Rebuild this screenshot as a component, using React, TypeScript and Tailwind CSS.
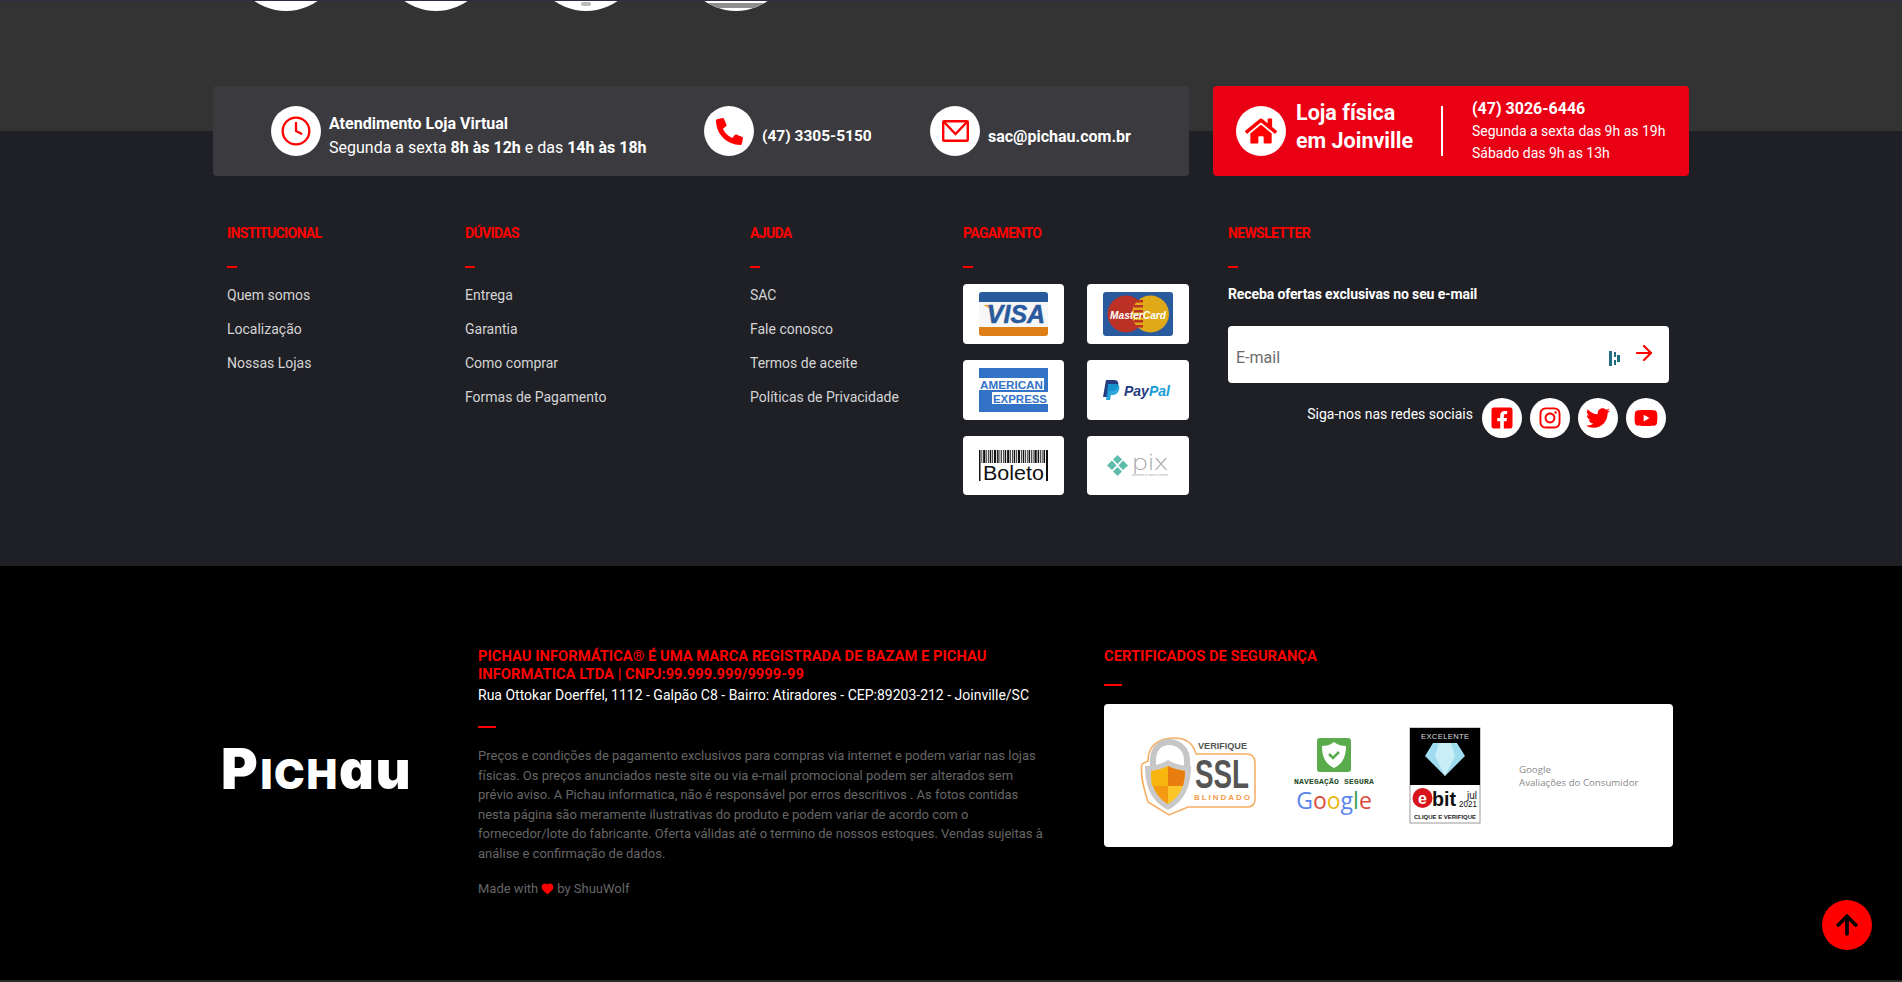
import React from 'react';
import { ArrowRight, ArrowUp, Clock, Heart } from 'lucide-react';
import { FaFacebookSquare, FaHome, FaInstagram, FaPhoneAlt, FaTwitter, FaYoutube } from 'react-icons/fa';

const columns = [
  { title: 'INSTITUCIONAL', width: 'w-[238px]', links: ['Quem somos', 'Localização', 'Nossas Lojas'] },
  { title: 'DÚVIDAS', width: 'w-[285px]', links: ['Entrega', 'Garantia', 'Como comprar', 'Formas de Pagamento'] },
  { title: 'AJUDA', width: 'w-[213px]', links: ['SAC', 'Fale conosco', 'Termos de aceite', 'Políticas de Privacidade'] },
];

const barcode = [2, 1, 3, 1, 1, 2, 1, 3, 2, 1, 1, 1, 2, 3, 1, 1, 2, 1, 3, 1, 2, 1, 1, 2, 1, 1, 3, 2, 1, 1, 2, 1];

function VisaLogo() {
  return (
    <svg className="overflow-visible" width="69" height="44" viewBox="0 0 69 44">
      <rect width="69" height="44" rx="3" fill="#f6f6f6" />
      <path d="M0 3a3 3 0 0 1 3-3h63a3 3 0 0 1 3 3v7H0z" fill="#2a5a9e" />
      <path d="M0 35h69v6a3 3 0 0 1-3 3H3a3 3 0 0 1-3-3z" fill="#dd7e17" />
      <path d="M4 13h9l3 10c-2-5-7-8-12-10z" fill="#e49a2b" />
      <text x="37" y="31" textAnchor="middle" fontFamily="Liberation Sans" fontSize="25" fontWeight="700" fontStyle="italic" fill="#2a5a9e" stroke="#2a5a9e" strokeWidth="0.5">VISA</text>
    </svg>
  );
}

function MasterLogo() {
  return (
    <svg className="overflow-visible" width="70" height="44" viewBox="0 0 70 44">
      <rect width="70" height="44" rx="3" fill="#2a5a9e" />
      <circle cx="23" cy="22" r="18.5" fill="#bb3126" />
      <circle cx="47.5" cy="22" r="18.5" fill="#e0a917" />
      {[8, 13, 18, 23, 28, 33].map((y) => (
        <rect key={y} x="31" y={y} width="9" height="2.5" fill="#bb3126" />
      ))}
      <text x="7" y="27" fontFamily="Liberation Sans" fontSize="11" fontWeight="700" fontStyle="italic" fill="#fff" textLength="56" lengthAdjust="spacingAndGlyphs">MasterCard</text>
    </svg>
  );
}

function AmexLogo() {
  return (
    <svg className="overflow-visible" width="69" height="44" viewBox="0 0 69 44">
      <rect width="69" height="44" fill="#3373c6" />
      <rect y="10" width="65" height="12" fill="#fff" />
      <rect x="13" y="24" width="56" height="12" fill="#fff" />
      <text x="1" y="20.5" fontFamily="Liberation Sans" fontSize="11" fontWeight="700" fill="#3373c6" textLength="63" lengthAdjust="spacingAndGlyphs">AMERICAN</text>
      <text x="14" y="34.5" fontFamily="Liberation Sans" fontSize="11" fontWeight="700" fill="#3373c6" textLength="54" lengthAdjust="spacingAndGlyphs">EXPRESS</text>
    </svg>
  );
}

function PaypalLogo() {
  return (
    <svg className="overflow-visible" width="70" height="20" viewBox="0 0 70 20">
      <path d="M3 0h8c4 0 5 3 4 6-1 4-4 5-7 5H6l-1 6H0z" fill="#253b80" />
      <path d="M5 4h7c4 0 5 2 4 6-1 3-3 5-7 5H8l-1 5H3z" fill="#179bd7" opacity="0.9" />
      <text x="21" y="16" fontFamily="Liberation Sans" fontSize="14" fontWeight="700" fontStyle="italic" fill="#253b80">Pay<tspan fill="#179bd7">Pal</tspan></text>
    </svg>
  );
}

function BoletoLogo() {
  let x = 0;
  return (
    <svg className="overflow-visible" width="69" height="31" viewBox="0 0 69 31">
      {barcode.map((w, i) => {
        const bar = <rect key={i} x={x} y="0" width={w * 0.75} height={i === 0 ? 31 : 13} fill="#111" />;
        x += w * 0.75 + 0.95;
        return bar;
      })}
      <rect x="67" y="0" width="2" height="31" fill="#111" />
      <text x="4" y="30" fontFamily="Liberation Sans" fontSize="20" fill="#111" textLength="61" lengthAdjust="spacingAndGlyphs">Boleto</text>
    </svg>
  );
}

function PixLogo() {
  return (
    <svg className="overflow-visible" width="62" height="23" viewBox="0 0 62 23">
      <g fill="#5dbcab">
        <path d="M10.5 1 15 5.5l-4.5 4.5L6 5.5z" />
        <path d="M10.5 13 15 17.5 10.5 22 6 17.5z" />
        <path d="M5 6.5 9.5 11.5 5 16 0 11.5z" />
        <path d="M16 6.5 21 11.5 16 16l-4.5-4.5z" />
      </g>
      <text x="25" y="16" fontFamily="Inter" fontSize="22" fontWeight="200" fill="#a9a9a9" textLength="36" lengthAdjust="spacingAndGlyphs">pix</text>
      <text x="25" y="21.5" fontFamily="Inter" fontSize="2.500" fill="#a9a9a9" textLength="36" lengthAdjust="spacingAndGlyphs">powered by Banco Central</text>
    </svg>
  );
}

function SslBadge() {
  return (
    <svg className="overflow-visible" width="116" height="80" viewBox="0 0 116 80">
      <path d="M34 2c14 0 20 8 22 16h50c6 0 9 3 9 9v36c0 5-3 8-8 8H48L29 79 8 66C3 50 0 38 2 28l6-3C8 10 18 2 34 2z" fill="#fff" stroke="#f6ad62" strokeWidth="1.5" />
      <path d="M13 34V24C13 12 21 6 29 6s18 6 18 18v10" fill="none" stroke="#c6c6c6" strokeWidth="6" />
      <path d="M28 24c8 5 16 6 23 6 0 20-6 35-23 44C11 65 5 50 5 30c8 0 15-1 23-6z" fill="#c9c9c9" />
      <path d="M28 30c6 3 11 4 17 5 0 15-5 26-17 33-12-7-17-18-17-33 6-1 11-2 17-5z" fill="#fcc52a" />
      <path d="M28 30v20H12c-1-5-1-10-1-15 6-1 11-2 17-5z" fill="#f9b50f" />
      <path d="M28 30c6 3 11 4 17 5 0 5-1 11-2 15H28z" fill="#e97d0d" />
      <path d="M13 50h15v18c-7-4-12-10-15-18z" fill="#f49a12" />
      <text x="58" y="13" fontFamily="Liberation Sans" fontSize="9" fontWeight="700" fill="#555" textLength="49" lengthAdjust="spacingAndGlyphs">VERIFIQUE</text>
      <text x="55" y="52" fontFamily="Liberation Sans" fontSize="40" fontWeight="700" fill="#555" textLength="54" lengthAdjust="spacingAndGlyphs">SSL</text>
      <text x="54" y="64" fontFamily="Liberation Sans" fontSize="8" fontWeight="700" fill="#f49a4a" textLength="56">BLINDADO</text>
    </svg>
  );
}

function SafeBrowsing() {
  return (
    <div className="flex flex-col items-center w-[80px]">
      <svg width="34" height="34" viewBox="0 0 34 34">
        <rect width="34" height="34" rx="3" fill="#5aab4b" />
        <path d="M17 4c4 3 8 4 12 4 0 10-3 18-12 22C8 26 5 18 5 8c4 0 8-1 12-4z" fill="#fff" />
        <path d="m12 16 4 4 6-6" fill="none" stroke="#5aab4b" strokeWidth="2.5" />
      </svg>
      <span className="mt-[5px] text-[8px] leading-[10px] tracking-[0.2px] font-bold text-[#1f4a1f] whitespace-nowrap font-['Liberation_Mono',monospace]">NAVEGAÇÃO SEGURA</span>
      <span className="text-[23px] leading-[26px] whitespace-nowrap font-['Open_Sans',sans-serif]">
        <span className="text-[#5a85ee]">G</span>
        <span className="text-[#dd4b3e]">o</span>
        <span className="text-[#eab80f]">o</span>
        <span className="text-[#5a85ee]">g</span>
        <span className="text-[#3da14f]">l</span>
        <span className="text-[#dd4b3e]">e</span>
      </span>
    </div>
  );
}

function EbitBadge() {
  return (
    <svg className="overflow-visible" width="70" height="95" viewBox="0 0 70 95">
      <rect width="70" height="95" fill="#fff" stroke="#999" />
      <rect width="70" height="57" fill="#000" />
      <text x="11" y="10.5" fontFamily="Liberation Sans" fontSize="7.5" fill="#ddd" textLength="48">EXCELENTE</text>
      <path d="M23 15h24l8 13-20 20-20-20z" fill="#9fdcef" />
      <path d="M29 15h12l4 13H25zM25 28h20l-10 20z" fill="#c9eef7" />
      <circle cx="12.500" cy="70" r="10" fill="#d8151b" />
      <text x="12.500" y="75.500" textAnchor="middle" fontFamily="Liberation Sans" fontSize="16" fontWeight="700" fill="#fff">e</text>
      <text x="22" y="78" fontFamily="Liberation Sans" fontSize="21" fontWeight="700" fill="#111" textLength="24" lengthAdjust="spacingAndGlyphs">bit</text>
      <text x="57" y="71" fontFamily="Liberation Sans" fontSize="10" fill="#111" textLength="10" lengthAdjust="spacingAndGlyphs">jul</text>
      <text x="49" y="79" fontFamily="Liberation Sans" fontSize="8.500" fill="#111" textLength="18" lengthAdjust="spacingAndGlyphs">2021</text>
      <text x="4" y="91" fontFamily="Liberation Sans" fontSize="6" fontWeight="700" fill="#222" textLength="62" lengthAdjust="spacingAndGlyphs">CLIQUE E VERIFIQUE</text>
    </svg>
  );
}

function PayCard({ children }: { children: React.ReactNode }) {
  return <div className="bg-white rounded-[4px] flex items-center justify-center">{children}</div>;
}

function Dash({ className }: { className: string }) {
  return <div className={`h-[2px] bg-[#ff0000] ${className}`} />;
}

function Social({ children }: { children: React.ReactNode }) {
  return (
    <a className="w-10 h-10 rounded-full bg-white flex items-center justify-center text-[#ff0000] text-[24px]">
      {children}
    </a>
  );
}

export default function App() {
  return (
    <div className="relative h-[982px] overflow-hidden bg-black font-['Roboto',sans-serif] text-white">
      <div className="h-[566px] bg-[linear-gradient(#333333_131px,#1f2026_131px)]">
        {/* Category circles cut by the viewport */}
        <div className="h-[11px] overflow-hidden flex items-end gap-[40px] pl-[231px] border-t border-[#2e2e3e]">
          <div className="w-[110px] h-[110px] rounded-full bg-white shrink-0" />
          <div className="w-[110px] h-[110px] rounded-full bg-white shrink-0" />
          <div className="w-[110px] h-[110px] rounded-full bg-white shrink-0 flex flex-col items-center justify-end">
            <div className="w-[10px] h-[4px] rounded-full bg-[#bbbbbb] mb-[5px]" />
          </div>
          <div className="w-[110px] h-[110px] rounded-full bg-white shrink-0 overflow-hidden flex flex-col justify-end">
            <div className="h-[5px] bg-[#8f8f8f] mb-[3px]" />
          </div>
        </div>

        {/* Contact bars */}
        <div className="flex pl-[213px] mt-[75px]">
          <div className="w-[976px] h-[90px] bg-[#3b3b3f] rounded-[4px] flex items-center pl-[58px] text-[16px]">
            <div className="w-[433px] flex items-center gap-2">
              <div className="w-[50px] h-[50px] rounded-full bg-white flex items-center justify-center shrink-0">
                <Clock className="w-8 h-8 text-[#ff0000]" strokeWidth={1.7} />
              </div>
              <div className="pt-[10px] leading-[24px] whitespace-nowrap">
                <p className="font-bold">Atendimento Loja Virtual</p>
                <p>Segunda a sexta <b>8h às 12h</b> e das <b>14h às 18h</b></p>
              </div>
            </div>
            <div className="w-[226px] flex items-center gap-2">
              <div className="w-[50px] h-[50px] rounded-full bg-white flex items-center justify-center shrink-0 text-[#ff0000] text-[27px]">
                <FaPhoneAlt />
              </div>
              <span className="font-bold text-[15.5px] pt-[12px]">(47) 3305-5150</span>
            </div>
            <div className="flex items-center gap-2">
              <div className="w-[50px] h-[50px] rounded-full bg-white flex items-center justify-center shrink-0">
                <svg width="27" height="22" viewBox="0 0 27 22" fill="none" stroke="#ff0000" strokeWidth="2.4">
                  <rect x="1.200" y="1.200" width="24.600" height="19.600" rx="1" />
                  <path d="m2 2 11.500 12L25 2" />
                </svg>
              </div>
              <span className="font-bold pt-[12px]">sac@pichau.com.br</span>
            </div>
          </div>

          <div className="w-[476px] h-[90px] ml-[24px] bg-[#ea0014] rounded-[4px] flex items-center pl-[23px]">
            <div className="w-[50px] h-[50px] rounded-full bg-white flex items-center justify-center text-[#ff0000] text-[32px] shrink-0">
              <FaHome />
            </div>
            <div className="w-[133px] ml-[10px] pb-[8px] text-[21.5px] leading-[28px] font-bold whitespace-nowrap">
              Loja física
              <br />
              em Joinville
            </div>
            <div className="w-[2px] h-[50px] bg-white ml-[12px]" />
            <div className="ml-[29px] whitespace-nowrap">
              <p className="text-[16px] leading-[22px] font-bold">(47) 3026-6446</p>
              <p className="text-[14px] leading-[22px]">Segunda a sexta das 9h as 19h</p>
              <p className="text-[14px] leading-[22px]">Sábado das 9h as 13h</p>
            </div>
          </div>
        </div>

        {/* Link columns */}
        <div className="flex pl-[227px] mt-[49px]">
          {columns.map((col) => (
            <div key={col.title} className={col.width}>
              <h3 className="text-[14px] leading-[16px] font-bold tracking-[-0.65px] text-[#ff0000]">{col.title}</h3>
              <Dash className="w-[10px] mt-[25px]" />
              <ul className="mt-[10px] text-[14px] text-[#d4d4d4]">
                {col.links.map((link) => (
                  <li key={link} className="h-[34px] flex items-center">{link}</li>
                ))}
              </ul>
            </div>
          ))}

          <div className="w-[265px]">
            <h3 className="text-[14px] leading-[16px] font-bold tracking-[-0.65px] text-[#ff0000]">PAGAMENTO</h3>
            <Dash className="w-[10px] mt-[25px]" />
            <div className="mt-4 grid grid-cols-[101px_102px] grid-rows-[60px_60px_59px] gap-x-[23px] gap-y-4">
              <PayCard><VisaLogo /></PayCard>
              <PayCard><MasterLogo /></PayCard>
              <PayCard><AmexLogo /></PayCard>
              <PayCard><PaypalLogo /></PayCard>
              <PayCard><BoletoLogo /></PayCard>
              <PayCard><PixLogo /></PayCard>
            </div>
          </div>

          <div className="w-[441px]">
            <h3 className="text-[14px] leading-[16px] font-bold tracking-[-0.65px] text-[#ff0000]">NEWSLETTER</h3>
            <Dash className="w-[10px] mt-[25px]" />
            <p className="mt-[18px] text-[14px] leading-[16px] font-bold tracking-[-0.12px]">Receba ofertas exclusivas no seu e-mail</p>
            <div className="relative mt-[24px] h-[57px] bg-white rounded-[4px] flex items-center pl-2 pt-[7px] text-[16px] text-[#6b6b6b]">
              E-mail
              <svg className="absolute left-[381px] top-[25px]" width="11" height="15" viewBox="0 0 11 15" fill="#1f6f80">
                <rect x="0" y="0" width="3" height="15" />
                <rect x="5" y="1" width="2" height="5" />
                <rect x="5" y="9" width="2" height="5" />
                <rect x="8" y="4" width="3" height="7" />
              </svg>
              <ArrowRight className="absolute left-[404px] top-[15px] w-6 h-6 text-[#ff0000]" strokeWidth={2.2} />
            </div>
            <div className="flex items-center justify-end gap-2 pr-[3px] mt-[15px]">
              <span className="text-[14px] mr-[1px] -mt-[8px]">Siga-nos nas redes sociais</span>
              <Social><FaFacebookSquare /></Social>
              <Social><FaInstagram /></Social>
              <Social><FaTwitter /></Social>
              <Social><FaYoutube /></Social>
            </div>
          </div>
        </div>
      </div>

      {/* Legal and certificates */}
      <div className="h-[416px] flex pl-[221px] pt-[81px] border-b-2 border-[#2b2b2b]">
        <div className="w-[257px] pt-[97px]">
          <div className="flex items-baseline h-[50px] leading-[50px] whitespace-nowrap font-['Inter',sans-serif] font-black tracking-[1.7px] [font-feature-settings:'cv11']">
            <span className="text-[56px]">P</span>
            <span className="text-[41px] ml-[1px]">ICH</span>
            <span className="text-[54px]">au</span>
          </div>
        </div>
        <div className="w-[566px]">
          <h3 className="text-[14.75px] leading-[18px] font-bold text-[#ff0000]">
            PICHAU INFORMÁTICA® É UMA MARCA REGISTRADA DE BAZAM E PICHAU INFORMATICA LTDA | CNPJ:99.999.999/9999-99
          </h3>
          <p className="text-[14px] leading-[22px] mt-[1px] whitespace-nowrap">
            Rua Ottokar Doerffel, 1112 - Galpão C8 - Bairro: Atiradores - CEP:89203-212 - Joinville/SC
          </p>
          <Dash className="w-[18px] mt-[20px]" />
          <p className="mt-[18px] text-[13px] leading-[19.6px] text-[#666666]">
            Preços e condições de pagamento exclusivos para compras via internet e podem variar nas lojas físicas. Os preços anunciados neste site ou via e-mail promocional podem ser alterados sem prévio aviso. A Pichau informatica, não é responsável por erros descritivos . As fotos contidas nesta página são meramente ilustrativas do produto e podem variar de acordo com o fornecedor/lote do fabricante. Oferta válidas até o termino de nossos estoques. Vendas sujeitas à análise e confirmação de dados.
          </p>
          <p className="mt-[15px] text-[13px] leading-[20px] text-[#666666] flex items-center gap-[3px]">
            Made with <Heart className="w-[13px] h-[13px] text-[#ff0000] fill-[#ff0000]" /> by ShuuWolf
          </p>
        </div>
        <div className="ml-[60px] w-[569px]">
          <h3 className="text-[14.75px] leading-[18px] font-bold text-[#ff0000]">CERTIFICADOS DE SEGURANÇA</h3>
          <Dash className="w-[18px] mt-[19px]" />
          <div className="mt-[18px] h-[143px] bg-white rounded-[4px] flex items-center pl-[36px]">
            <SslBadge />
            <div className="ml-[38px]"><SafeBrowsing /></div>
            <div className="ml-[36px]"><EbitBadge /></div>
            <div className="ml-[39px] text-[9.7px] leading-[13px] text-[#8a8a8a] whitespace-nowrap font-['Open_Sans',sans-serif]">
              Google
              <br />
              Avaliações do Consumidor
            </div>
          </div>
        </div>
      </div>

      <button className="absolute left-[1822px] top-[900px] w-[50px] h-[50px] rounded-full bg-[#ff0000] flex items-center justify-center text-black">
        <ArrowUp className="w-[30px] h-[30px]" strokeWidth={3} />
      </button>
    </div>
  );
}
